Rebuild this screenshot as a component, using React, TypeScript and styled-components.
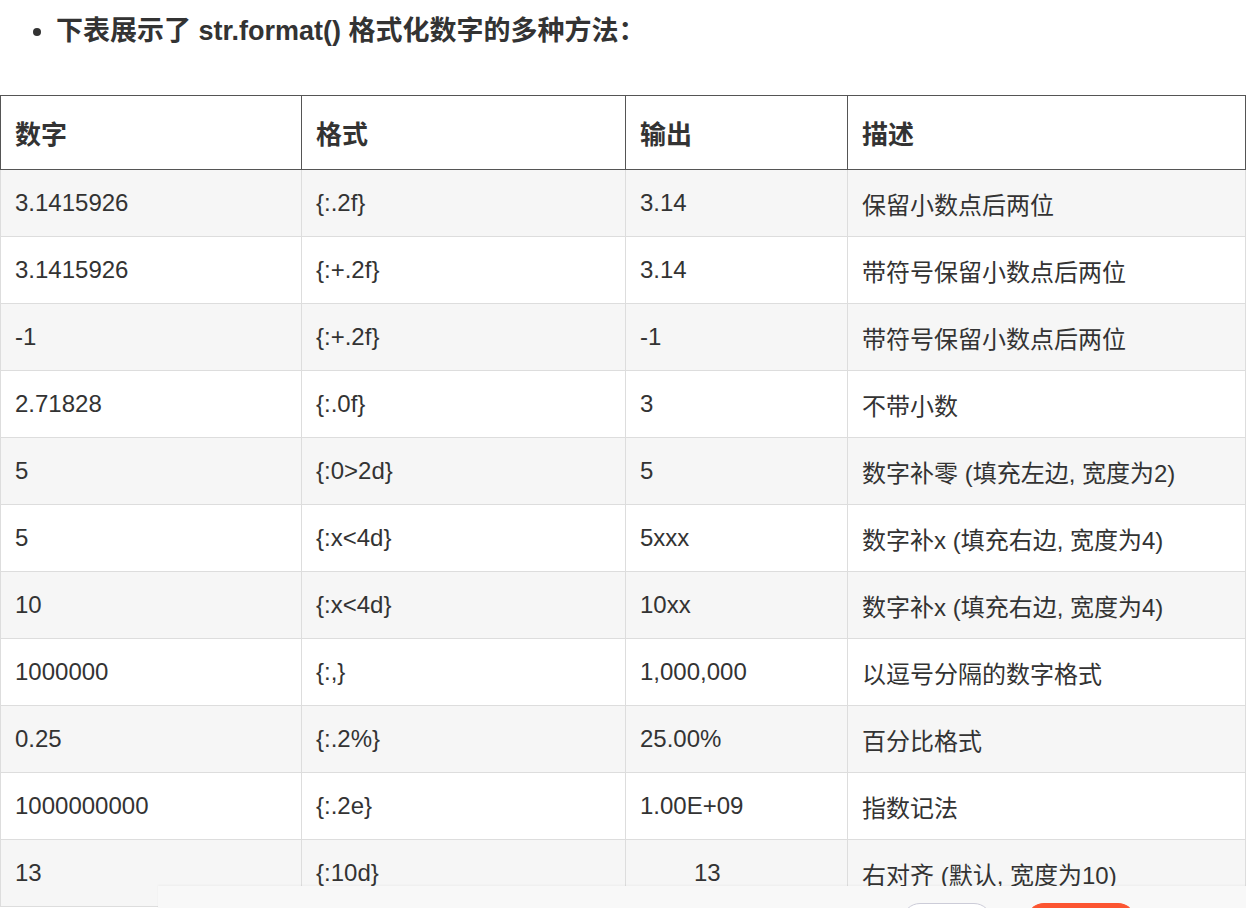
import React from "react";
import styled, { createGlobalStyle } from "styled-components";

const Global = createGlobalStyle`
  body {
    margin: 0;
    background: #fff;
    font-family: "Liberation Sans", Arial, "Noto Sans CJK SC", sans-serif;
    color: #333;
    overflow: hidden;
  }
`;

const List = styled.ul`
  margin: 0;
  padding: 11px 0 0 56px;
  height: 95px;
  box-sizing: border-box;
`;
const Item = styled.li`
  font-size: 27px;
  font-weight: bold;
  line-height: 40px;
`;
const Table = styled.table`
  width: 1246px;
  border-collapse: collapse;
  font-size: 24px;
`;
const Th = styled.th<{ $w?: number }>`
  text-align: left;
  font-weight: bold;
  font-size: 26px;
  height: 73px;
  padding: 0 14px;
  border: 1px solid #555;
  width: ${(p) => (p.$w ? `${p.$w}px` : "auto")};
`;
const Row = styled.tr<{ $odd: boolean }>`
  background: ${(p) => (p.$odd ? "#f6f6f6" : "#fff")};
`;
const Td = styled.td<{ $indent?: boolean }>`
  height: 66px;
  padding: 0 14px;
  padding-left: ${(p) => (p.$indent ? "68px" : "14px")};
  border: 1px solid #ddd;
`;
const Bar = styled.div`
  position: fixed;
  left: 158px;
  right: 0;
  top: 886px;
  height: 30px;
  background: #f8f8f8;
  box-shadow: 0 -1px 2px rgba(0, 0, 0, 0.04);
  display: flex;
  justify-content: flex-end;
  gap: 34px;
  padding: 17px 110px 0 0;
`;
const Btn = styled.div<{ $primary?: boolean }>`
  width: ${(p) => (p.$primary ? "110px" : "90px")};
  height: 36px;
  border-radius: 18px;
  box-sizing: border-box;
  background: ${(p) => (p.$primary ? "#fc5531" : "#fff")};
  border: 1px solid ${(p) => (p.$primary ? "#fc5531" : "#ccccd8")};
`;

const rows = [
  ["3.1415926", "{:.2f}", "3.14", "保留小数点后两位"],
  ["3.1415926", "{:+.2f}", "3.14", "带符号保留小数点后两位"],
  ["-1", "{:+.2f}", "-1", "带符号保留小数点后两位"],
  ["2.71828", "{:.0f}", "3", "不带小数"],
  ["5", "{:0>2d}", "5", "数字补零 (填充左边, 宽度为2)"],
  ["5", "{:x<4d}", "5xxx", "数字补x (填充右边, 宽度为4)"],
  ["10", "{:x<4d}", "10xx", "数字补x (填充右边, 宽度为4)"],
  ["1000000", "{:,}", "1,000,000", "以逗号分隔的数字格式"],
  ["0.25", "{:.2%}", "25.00%", "百分比格式"],
  ["1000000000", "{:.2e}", "1.00E+09", "指数记法"],
  ["13", "{:10d}", "13", "右对齐 (默认, 宽度为10)"],
];

export default function App() {
  return (
    <>
      <Global />
      <List>
        <Item>下表展示了 str.format() 格式化数字的多种方法：</Item>
      </List>
      <Table>
        <thead>
          <tr>
            <Th $w={272}>数字</Th>
            <Th $w={295}>格式</Th>
            <Th $w={193}>输出</Th>
            <Th>描述</Th>
          </tr>
        </thead>
        <tbody>
          {rows.map((r, i) => (
            <Row key={i} $odd={i % 2 === 0}>
              <Td>{r[0]}</Td>
              <Td>{r[1]}</Td>
              <Td $indent={i === 10}>{r[2]}</Td>
              <Td>{r[3]}</Td>
            </Row>
          ))}
        </tbody>
      </Table>
      <Bar>
        <Btn />
        <Btn $primary />
      </Bar>
    </>
  );
}
